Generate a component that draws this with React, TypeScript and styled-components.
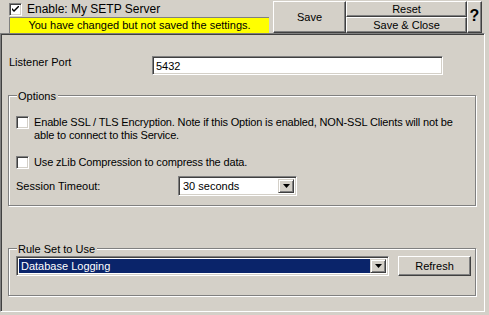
import styled, { createGlobalStyle } from 'styled-components'

const GlobalStyle = createGlobalStyle`
  html, body {
    margin: 0;
    padding: 0;
    background: #d4d0c8;
  }
  body {
    font-family: "Liberation Sans", Arial, sans-serif;
    font-size: 11px;
    color: #000;
  }
`

const CheckMark = () => (
  <svg width="7" height="7" viewBox="0 0 7 7">
    <path d="M0 2 L0 4 L2 6 L7 1 L7 -1 L2 4 Z" fill="#000" />
  </svg>
)

const DownArrow = () => (
  <svg width="7" height="4" viewBox="0 0 7 4">
    <path d="M0 0 H7 L3.5 4 Z" fill="#000" />
  </svg>
)

const App = () => {
  return (
    <>
      <GlobalStyle />
      <Window>
        <TopBar>
          <StatusColumn>
            <CheckRow>
              <CheckBox>
                <CheckMark />
              </CheckBox>
              <span>Enable: My SETP Server</span>
            </CheckRow>
            <Warning>You have changed but not saved the settings.</Warning>
          </StatusColumn>
          <ButtonGroup>
            <Button $width={73} $height={32}>Save</Button>
            <StackedButtons>
              <Button $width={121} $height={16}>Reset</Button>
              <Button $width={121} $height={16}>Save &amp; Close</Button>
            </StackedButtons>
            <HelpButton>?</HelpButton>
          </ButtonGroup>
        </TopBar>

        <Panel>
          <FieldRow>
            <FieldLabel $width={143}>Listener Port</FieldLabel>
            <TextInput>5432</TextInput>
          </FieldRow>

          <GroupBox $height={119} $top={12}>
            <Legend>Options</Legend>
            <OptionsBody>
              <OptionRow>
                <CheckBox />
                <OptionText>
                  Enable SSL / TLS Encryption. Note if this Option is enabled, NON-SSL Clients will not be
                  <br />
                  able to connect to this Service.
                </OptionText>
              </OptionRow>
              <OptionRow $top={14}>
                <CheckBox />
                <OptionText>Use zLib Compression to compress the data.</OptionText>
              </OptionRow>
              <TimeoutRow>
                <FieldLabel $width={162}>Session Timeout:</FieldLabel>
                <Select $width={119}>
                  <SelectValue>30 seconds</SelectValue>
                  <DropButton>
                    <DownArrow />
                  </DropButton>
                </Select>
              </TimeoutRow>
            </OptionsBody>
          </GroupBox>

          <GroupBox $height={56} $top={34}>
            <Legend>Rule Set to Use</Legend>
            <RuleRow>
              <Select $width={373}>
                <SelectValue $selected>Database Logging</SelectValue>
                <DropButton>
                  <DownArrow />
                </DropButton>
              </Select>
              <Button $width={73} $height={20}>Refresh</Button>
            </RuleRow>
          </GroupBox>
        </Panel>
      </Window>
    </>
  )
}

export default App

const Window = styled.div`
  width: 489px;
  height: 315px;
  display: flex;
  flex-direction: column;
  background: #d4d0c8;
`

const TopBar = styled.div`
  height: 33px;
  display: flex;
  flex-direction: row;
  align-items: flex-start;
`

const StatusColumn = styled.div`
  display: flex;
  flex-direction: column;
  padding-left: 9px;
  padding-top: 3px;
`

const CheckRow = styled.div`
  display: flex;
  align-items: center;
  gap: 5px;
  height: 13px;
  line-height: 13px;
  font-size: 12px;
`

const CheckBox = styled.span`
  box-sizing: border-box;
  width: 13px;
  height: 13px;
  flex: none;
  display: flex;
  align-items: center;
  justify-content: center;
  background: #fff;
  border: 1px solid;
  border-color: #808080 #fff #fff #808080;
  box-shadow: inset 1px 1px #404040, inset -1px -1px #d4d0c8;
`

const Warning = styled.div`
  box-sizing: border-box;
  margin-top: 1px;
  width: 260px;
  height: 16px;
  background: #ffff00;
  border-top: 1px solid #808080;
  border-left: 1px solid #808080;
  text-align: center;
  line-height: 15px;
  white-space: nowrap;
`

const ButtonGroup = styled.div`
  display: flex;
  margin-left: 4px;
  margin-top: 1px;
`

const StackedButtons = styled.div`
  display: flex;
  flex-direction: column;
`

const Button = styled.div<{ $width: number; $height: number }>`
  box-sizing: border-box;
  width: ${(p) => p.$width}px;
  height: ${(p) => p.$height}px;
  display: flex;
  align-items: center;
  justify-content: center;
  background: #d4d0c8;
  border: 1px solid;
  border-color: #fff #404040 #404040 #fff;
  box-shadow: inset -1px -1px #808080;
  white-space: nowrap;
  flex: none;
`

const HelpButton = styled(Button).attrs({ $width: 15, $height: 32 })`
  font-size: 16px;
  font-weight: bold;
  padding-bottom: 2px;
`

const Panel = styled.div`
  box-sizing: border-box;
  width: 485px;
  height: 279px;
  padding: 22px 0 0 7px;
  border: 1px solid;
  border-color: #808080 #fff #fff #808080;
  box-shadow: inset 1px 1px #404040;
  display: flex;
  flex-direction: column;
`

const FieldRow = styled.div`
  display: flex;
  align-items: flex-start;
  padding-left: 1px;
`

const FieldLabel = styled.span<{ $width: number }>`
  width: ${(p) => p.$width}px;
  flex: none;
  line-height: 13px;
`

const TextInput = styled.div`
  box-sizing: border-box;
  width: 291px;
  height: 19px;
  background: #fff;
  border: 1px solid;
  border-color: #808080 #fff #fff #808080;
  box-shadow: inset 1px 1px #404040, inset -1px -1px #d4d0c8;
  padding: 2px 3px;
  line-height: 14px;
`

const GroupBox = styled.fieldset<{ $height: number; $top: number }>`
  box-sizing: border-box;
  margin: ${(p) => p.$top}px 0 0 0;
  padding: 0 0 0 7px;
  width: 468px;
  height: ${(p) => p.$height}px;
  border: 1px solid #808080;
  box-shadow: 1px 1px 0 #fff, inset 1px 1px 0 #fff;
  min-width: 0;
`

const Legend = styled.legend`
  margin-left: 1px;
  padding: 3px 2px 0 1px;
  line-height: 13px;
  background: linear-gradient(to bottom, transparent 7px, #d4d0c8 7px);
`

const OptionsBody = styled.div`
  display: flex;
  flex-direction: column;
  padding-top: 13px;
`

const OptionRow = styled.div<{ $top?: number }>`
  display: flex;
  align-items: flex-start;
  gap: 5px;
  margin-top: ${(p) => p.$top ?? 0}px;
`

const OptionText = styled.span`
  line-height: 13px;
  white-space: nowrap;
  letter-spacing: -0.15px;
`

const TimeoutRow = styled.div`
  display: flex;
  align-items: center;
  margin-top: 7px;
`

const Select = styled.div<{ $width: number }>`
  box-sizing: border-box;
  width: ${(p) => p.$width}px;
  height: 20px;
  flex: none;
  display: flex;
  align-items: stretch;
  background: #fff;
  border: 1px solid;
  border-color: #808080 #fff #fff #808080;
  box-shadow: inset 1px 1px #404040, inset -1px -1px #d4d0c8;
  padding: 2px;
`

const SelectValue = styled.div<{ $selected?: boolean }>`
  flex: 1;
  display: flex;
  align-items: center;
  padding-left: 2px;
  background: ${(p) => (p.$selected ? '#0a246a' : 'transparent')};
  color: ${(p) => (p.$selected ? '#fff' : '#000')};
  white-space: nowrap;
`

const DropButton = styled.div`
  box-sizing: border-box;
  width: 16px;
  flex: none;
  display: flex;
  align-items: center;
  justify-content: center;
  background: #d4d0c8;
  border: 1px solid;
  border-color: #d4d0c8 #404040 #404040 #d4d0c8;
  box-shadow: inset 1px 1px #fff, inset -1px -1px #808080;
`

const RuleRow = styled.div`
  display: flex;
  align-items: flex-start;
  gap: 9px;
`
